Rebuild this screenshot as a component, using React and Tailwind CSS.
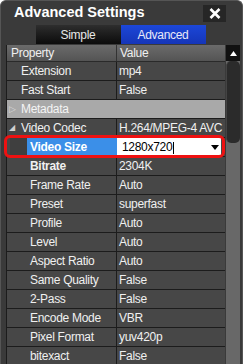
import React from "react";

const rows = [
  { p: "Extension", v: "mp4", indent: 0 },
  { p: "Fast Start", v: "False", indent: 0 },
  { p: "Metadata", cat: "collapsed" },
  { p: "Video Codec", v: "H.264/MPEG-4 AVC", indent: 0, exp: true },
  { p: "Video Size", v: "1280x720", sel: true },
  { p: "Bitrate", v: "2304K", indent: 1, bold: true },
  { p: "Frame Rate", v: "Auto", indent: 1 },
  { p: "Preset", v: "superfast", indent: 1 },
  { p: "Profile", v: "Auto", indent: 1 },
  { p: "Level", v: "Auto", indent: 1 },
  { p: "Aspect Ratio", v: "Auto", indent: 1 },
  { p: "Same Quality", v: "False", indent: 1 },
  { p: "2-Pass", v: "False", indent: 1 },
  { p: "Encode Mode", v: "VBR", indent: 1 },
  { p: "Pixel Format", v: "yuv420p", indent: 1 },
  { p: "bitexact", v: "False", indent: 1 },
];

function Row({ r }) {
  if (r.cat) {
    return (
      <div className="flex h-[19px] items-center border-b border-[#1c1c1c] bg-[#a9a9a9]">
        <span className="w-[14px] pl-[2px] text-[9px] leading-none text-[#d8d8d8]">▷</span>
        <span className="text-[#f4f4f4]">{r.p}</span>
      </div>
    );
  }
  if (r.sel) {
    return (
      <div className="relative flex h-[19px] border-b border-[#1c1c1c] bg-[#474747]">
        <div className="flex w-[110px] shrink-0">
          <div className="ml-[3px] w-[17px] bg-[#3f3f3f]" />
          <div className="flex flex-1 items-center bg-[#3b8fe8] pl-[3px] font-bold text-white">{r.p}</div>
        </div>
        <div className="flex w-[104px] items-center justify-between bg-white pl-[5px] pr-[2px] text-black">
          <span>
            {r.v}
            <span className="ml-[1px] inline-block h-[12px] w-px bg-black align-middle" />
          </span>
          <svg width="8" height="5" viewBox="0 0 8 5"><path d="M0 0h8L4 5z" fill="#000" /></svg>
        </div>
        <div className="absolute -top-[3px] -bottom-[2px] -left-[3px] -right-[0px] rounded-[6px] border-[3px] border-[#ee1111]" />
      </div>
    );
  }
  return (
    <div className="flex h-[19px] border-b border-[#1c1c1c] bg-[#474747] text-[#f0f0f0]">
      <div className={`flex w-[110px] shrink-0 items-center border-r border-[#1c1c1c] ${r.indent ? "pl-[23px]" : ""}`}>
        {r.indent ? null : (
          <span className="w-[14px] pl-[2px] text-[8px] leading-none text-[#cfcfcf]">{r.exp ? "◢" : ""}</span>
        )}
        <span className={r.bold ? "font-bold" : ""}>{r.p}</span>
      </div>
      <div className="flex flex-1 items-center pl-[2px] whitespace-nowrap">{r.v}</div>
    </div>
  );
}

export default function App() {
  return (
    <div
      className="h-[364px] w-[243px] overflow-hidden rounded-t-[6px] border-x border-t border-[#555] bg-[#3a3a3a] text-[12px] tracking-[-0.3px]"
      style={{ fontFamily: "'Liberation Sans', Arial, sans-serif" }}
    >
      <div className="flex h-[22px] items-center justify-between pl-[13px] pr-[16px] pt-[2px]">
        <span className="text-[14.5px] font-bold tracking-normal text-white">Advanced Settings</span>
        <div className="flex h-[17px] w-[23px] items-center justify-center bg-[#262626]">
          <svg width="12" height="11" viewBox="0 0 12 11">
            <path d="M1.5 1l9 9M10.5 1l-9 9" stroke="#fff" strokeWidth="2.6" />
          </svg>
        </div>
      </div>
      <div className="mt-[2px] flex justify-center pr-[2px]">
        <div className="flex h-[19px] w-[85px] items-center justify-center bg-gradient-to-b from-[#2e2e2e] to-[#0c0c0c] text-[#e8e8e8]">
          Simple
        </div>
        <div className="flex h-[19px] w-[85px] items-center justify-center bg-gradient-to-b from-[#1c47d8] to-[#1535b8] text-[#e8e8f8]">
          Advanced
        </div>
      </div>
      <div className="mt-[1px] flex">
        <div className="ml-[5px] w-[219px] border-l border-[#1c1c1c]">
          <div className="flex h-[17px] border-b border-[#2a2a2a] bg-gradient-to-b from-[#6b6b6b] to-[#545454] text-[#f0f0f0]">
            <div className="flex w-[110px] items-center border-r border-[#333] pl-[4px]">Property</div>
            <div className="flex flex-1 items-center pl-[3px]">Value</div>
          </div>
          {rows.map((r, i) => (
            <Row key={i} r={r} />
          ))}
        </div>
        <div className="ml-[1px] flex w-[14px] flex-col bg-[#686868]">
          <div className="flex h-[16px] items-center justify-center bg-[#111]">
            <svg width="7" height="5" viewBox="0 0 7 5"><path d="M0 5L3.5 0 7 5z" fill="#fff" /></svg>
          </div>
          <div className="h-[82px] rounded-[5px] border-l border-[#444] bg-[#2b2b2b]" />
        </div>
      </div>
    </div>
  );
}
